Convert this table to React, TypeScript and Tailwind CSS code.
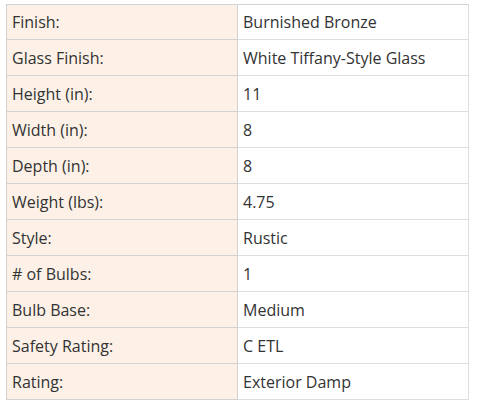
import React from 'react';

const rows: [string, string][] = [
  ['Finish:', 'Burnished Bronze'],
  ['Glass Finish:', 'White Tiffany-Style Glass'],
  ['Height (in):', '11'],
  ['Width (in):', '8'],
  ['Depth (in):', '8'],
  ['Weight (lbs):', '4.75'],
  ['Style:', 'Rustic'],
  ['# of Bulbs:', '1'],
  ['Bulb Base:', 'Medium'],
  ['Safety Rating:', 'C ETL'],
  ['Rating:', 'Exterior Damp'],
];

export default function App() {
  return (
    <div className="bg-white w-[478px] h-[411px] pt-[4px] pl-[6px]">
      <div
        className="w-[463px] border-t border-l border-[#d2d2d2] text-[16px] text-[#333]"
        style={{ fontFamily: '"Open Sans", "Noto Sans", sans-serif' }}
      >
        {rows.map(([label, value], i) => (
          <div key={label} className={`grid grid-cols-[231px_1fr] ${i === 0 ? 'h-[35px]' : 'h-[36px]'}`}>
            <div className="bg-[#fdf1e7] border-r border-b border-[#d2d2d2] pl-[5px] flex items-center">
              {label}
            </div>
            <div className="border-r border-b border-[#dedede] pl-[5px] flex items-center">{value}</div>
          </div>
        ))}
      </div>
    </div>
  );
}
